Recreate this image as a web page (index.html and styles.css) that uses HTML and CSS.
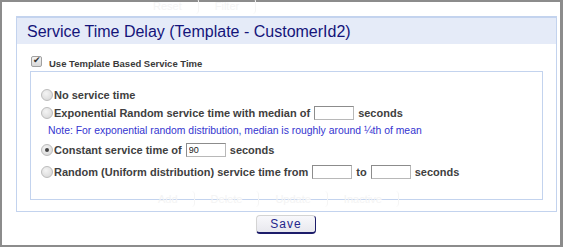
FILE: index.html
```html
<!DOCTYPE html>
<html lang="en">
<head>
    <meta charset="UTF-8">
    <title>Service Time Delay</title>
    <link rel="stylesheet" href="styles.css">
</head>
<body>
    <div class="dialog">
        <!-- faded page content showing through behind the dialog -->
        <div class="ghost ghost-top">
            <span class="ghost-btn">Reset</span>
            <span class="ghost-btn">Filter</span>
        </div>
        <div class="ghost ghost-bottom">
            <span class="ghost-btn">Add</span>
            <span class="ghost-btn">Delete</span>
            <span class="ghost-btn">Update</span>
            <span class="ghost-btn">Inactive</span>
        </div>

        <div class="panel">
            <div class="panel-head">Service Time Delay (Template - CustomerId2)</div>
            <div class="panel-body">
                <label class="use-template">
                    <input type="checkbox" class="check" checked>
                    <span>Use Template Based Service Time</span>
                </label>
                <div class="options">
                    <label class="row row-first">
                        <input type="radio" name="svc" class="radio">No service time
                    </label>
                    <label class="row">
                        <input type="radio" name="svc" class="radio">Exponential Random service time with median of
                        <input type="text" class="num">seconds
                    </label>
                    <div class="note">Note: For exponential random distribution, median is roughly around &frac14;th of mean</div>
                    <label class="row">
                        <input type="radio" name="svc" class="radio" checked>Constant service time of
                        <input type="text" class="num" value="90">seconds
                    </label>
                    <label class="row row-last">
                        <input type="radio" name="svc" class="radio">Random (Uniform distribution) service time from
                        <input type="text" class="num">to
                        <input type="text" class="num">seconds
                    </label>
                </div>
            </div>
        </div>

        <div class="actions">
            <button class="save">Save</button>
        </div>
    </div>
</body>
</html>
```

FILE: styles.css
```css
body {
    margin: 0;
    background: #ffffff;
    font-family: "Liberation Sans", Arial, sans-serif;
}
.dialog {
    position: relative;
    width: 563px;
    height: 247px;
    box-sizing: border-box;
    border: 2px solid #8c8c8c;
    border-right-width: 3px;
    background: #ffffff;
}
.ghost {
    position: absolute;
    display: flex;
    color: #f4f4f4;
    font-size: 11px;
}
.ghost-top {
    top: -4px;
    left: 135px;
}
.ghost-bottom {
    top: 189px;
    left: 140px;
    z-index: 2;
    pointer-events: none;
}
.ghost-btn {
    padding: 2px 16px;
    border-right: 1px solid #f5f5f5;
    border-radius: 4px;
}
.panel {
    margin: 14px 3px 0 14px;
    border: 1px solid #c3d3ee;
    border-top-width: 2px;
}
.panel-head {
    height: 26px;
    line-height: 28px;
    padding-left: 10px;
    background: #e5ebf8;
    color: #14147a;
    font-size: 16px;
}
.panel-body {
    padding: 10px 13px 11px 13px;
}
.use-template {
    display: flex;
    align-items: center;
    height: 14px;
    margin-left: 1px;
    font-size: 9.5px;
    font-weight: bold;
    color: #3a3a3a;
}
.use-template span {
    margin-top: 5px;
}
.check {
    appearance: none;
    position: relative;
    width: 11px;
    height: 11px;
    margin: 0 7px 0 0;
    border: 1px solid #a0a0a0;
    border-radius: 2px;
    background: linear-gradient(#f4f4f4, #d8d8d8);
}
.check:checked::after {
    content: "\2714";
    position: absolute;
    left: 1px;
    top: -2px;
    font-size: 9px;
    color: #333333;
}
.options {
    margin-top: 3px;
    padding: 14px 0 18px 10px;
    border: 1px solid #c3d3ee;
}
.row {
    display: flex;
    align-items: center;
    height: 18px;
    font-size: 11px;
    font-weight: bold;
    color: #404040;
}
.row-last {
    margin-top: 4px;
}
.radio {
    appearance: none;
    position: relative;
    width: 12px;
    height: 12px;
    margin: 0 1px 0 0;
    border: 1px solid #bcbcbc;
    border-radius: 50%;
    background: radial-gradient(circle at 40% 35%, #f4f4f4, #d4d4d4);
}
.radio:checked::after {
    content: "";
    position: absolute;
    left: 3px;
    top: 3px;
    width: 4px;
    height: 4px;
    border-radius: 50%;
    background: #444444;
}
.num {
    width: 40px;
    height: 14px;
    box-sizing: border-box;
    margin: 0 4px;
    padding: 0 2px;
    border: 1px solid #b8b8b8;
    border-top-color: #8c8c8c;
    border-left-color: #8c8c8c;
    font-family: "Liberation Sans", Arial, sans-serif;
    font-size: 9px;
    color: #222222;
}
.note {
    height: 18px;
    line-height: 18px;
    padding-left: 7px;
    margin-bottom: 1px;
    font-size: 10.4px;
    color: #3434d0;
}
.actions {
    display: flex;
    justify-content: center;
    padding: 3px 0 0 10px;
}
.save {
    width: 60px;
    height: 19px;
    padding: 0;
    border: 1px solid #d4d4d4;
    border-right: 1px solid #1d1d6a;
    border-bottom: 2px solid #1d1d6a;
    border-radius: 4px;
    background: linear-gradient(#f8f8fb, #e8e8ee);
    color: #25258a;
    font-family: "Liberation Sans", Arial, sans-serif;
    font-size: 12px;
    letter-spacing: 1px;
}
```
